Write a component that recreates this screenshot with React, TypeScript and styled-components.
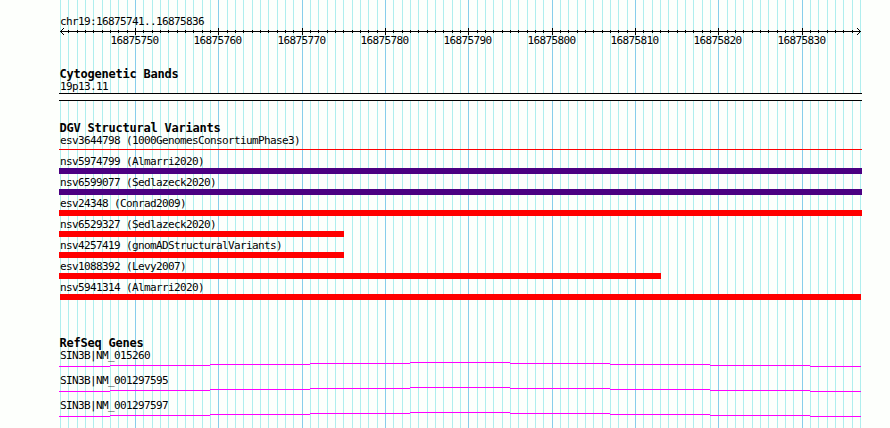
import React from 'react';
import styled, { createGlobalStyle } from 'styled-components';

const GlobalStyle = createGlobalStyle`
  body {
    margin: 0;
    background: #fdfffc;
  }
`

const START = 16875741;
const BASES = 96;

// x of a base inside the panel, one base is 8.33px
const baseX = (i: number) => Math.round((i * 25) / 3) + 1;
const isMajor = (i: number) => (START + i) % 10 === 0;
const positions = Array.from({ length: BASES + 1 }, (_, i) => i);

const variants = [
  { name: 'esv3644798 (1000GenomesConsortiumPhase3)', color: '#ff0000', width: 803, thin: true },
  { name: 'nsv5974799 (Almarri2020)', color: '#4b0082', width: 803 },
  { name: 'nsv6599077 (Sedlazeck2020)', color: '#4b0082', width: 803 },
  { name: 'esv24348 (Conrad2009)', color: '#ff0000', width: 803 },
  { name: 'nsv6529327 (Sedlazeck2020)', color: '#ff0000', width: 285 },
  { name: 'nsv4257419 (gnomADStructuralVariants)', color: '#ff0000', width: 285 },
  { name: 'esv1088392 (Levy2007)', color: '#ff0000', width: 602 },
  { name: 'nsv5941314 (Almarri2020)', color: '#ff0000', width: 801, offset: 1 },
];

const genes = ['SIN3B|NM_015260', 'SIN3B|NM_001297595', 'SIN3B|NM_001297597'];

// intron line: [x, width, y]
const intron = [
  [0, 51, 4],
  [51, 100, 3],
  [151, 100, 2],
  [251, 100, 1],
  [351, 100, 0],
  [451, 100, 1],
  [551, 100, 2],
  [651, 100, 3],
  [751, 51, 4],
];

const GridLines: React.FC = () => (
  <Grid width="803" height="428" shapeRendering="crispEdges">
    {positions.map((i) => (
      <rect key={i} x={baseX(i)} y="0" width="1" height="428" fill={isMajor(i) ? '#87ceeb' : '#afeeee'} />
    ))}
  </Grid>
);

const Ruler: React.FC = () => (
  <Scale width="803" height="20">
    <g shapeRendering="crispEdges">
      <rect x="1" y="3" width="801" height="1" />
      {positions.slice(1, BASES).map((i) => (
        <rect key={i} x={baseX(i)} y={isMajor(i) ? 0 : 2} width="1" height={isMajor(i) ? 7 : 3} />
      ))}
      {[1, 2, 3].map((d) => (
        <g key={d}>
          <rect x={1 + d} y={3 - d} width="1" height="1" />
          <rect x={1 + d} y={3 + d} width="1" height="1" />
          <rect x={801 - d} y={3 - d} width="1" height="1" />
          <rect x={801 - d} y={3 + d} width="1" height="1" />
        </g>
      ))}
    </g>
    {positions.filter(isMajor).map((i) => (
      <text key={i} x={baseX(i) - 24.6} y="16">{START + i}</text>
    ))}
  </Scale>
);

const App: React.FC = () => {
  return (
    <Page>
      <GlobalStyle />
      <Panel>
        <GridLines />
        <Content>
          <Label>chr19:16875741..16875836</Label>
          <Ruler />

          <Track $gap={19}>
            <Title>Cytogenetic Bands</Title>
            <Label>19p13.11</Label>
            <Band />
          </Track>

          <Track $gap={20}>
            <Title>DGV Structural Variants</Title>
            {variants.map((v) => (
              <VariantRow key={v.name}>
                <Label>{v.name}</Label>
                <Bar $color={v.color} $width={v.width} $thin={v.thin} $offset={v.offset} />
              </VariantRow>
            ))}
          </Track>

          <Track $gap={33}>
            <Title>RefSeq Genes</Title>
            {genes.map((gene) => (
              <GeneRow key={gene}>
                <Label>{gene}</Label>
                <Intron width="803" height="5" shapeRendering="crispEdges">
                  {intron.map(([x, w, y]) => (
                    <rect key={x} x={x} y={y} width={w} height="1" />
                  ))}
                </Intron>
              </GeneRow>
            ))}
          </Track>
        </Content>
      </Panel>
    </Page>
  );
};

export default App;

const Page = styled.div`
  width: 890px;
  height: 428px;
  padding-left: 59px;
  box-sizing: border-box;
  overflow: hidden;
  background: #fdfffc;
  color: #000;
  font-family: 'DejaVu Sans Mono', 'Liberation Mono', monospace;
  font-size: 11px;
  letter-spacing: -0.622px;
`

const Panel = styled.div`
  position: relative;
  width: 803px;
  height: 428px;
`

const Grid = styled.svg`
  position: absolute;
  top: 0;
  left: 0;
`

const Content = styled.div`
  position: relative;
  display: flex;
  flex-direction: column;
  padding-top: 16px;
`

const Label = styled.div`
  height: 12px;
  padding-left: 1px;
  line-height: 11px;
  white-space: pre;
`

const Scale = styled.svg`
  display: block;
  overflow: visible;
`

const Track = styled.section<{ $gap: number }>`
  display: flex;
  flex-direction: column;
  margin-top: ${({ $gap }) => $gap}px;
`

const Title = styled.div`
  height: 14px;
  padding-left: 0.5px;
  line-height: 14px;
  font-size: 12px;
  font-weight: 700;
  letter-spacing: -0.224px;
  white-space: pre;
`

const Band = styled.div`
  height: 8px;
  box-sizing: border-box;
  border-top: 1px solid #000;
  border-bottom: 1px solid #000;
  background: #fdfffc;
`

const VariantRow = styled.div`
  height: 21px;
`

const Bar = styled.div<{ $color: string; $width: number; $thin?: boolean; $offset?: number }>`
  width: ${({ $width }) => $width}px;
  height: ${({ $thin }) => ($thin ? 1 : 6)}px;
  margin-top: ${({ $thin }) => ($thin ? 2 : 0)}px;
  margin-left: ${({ $offset }) => $offset || 0}px;
  background: ${({ $color }) => $color};
`

const GeneRow = styled.div`
  height: 25px;
`

const Intron = styled.svg`
  display: block;
  fill: #ff00ff;
`
